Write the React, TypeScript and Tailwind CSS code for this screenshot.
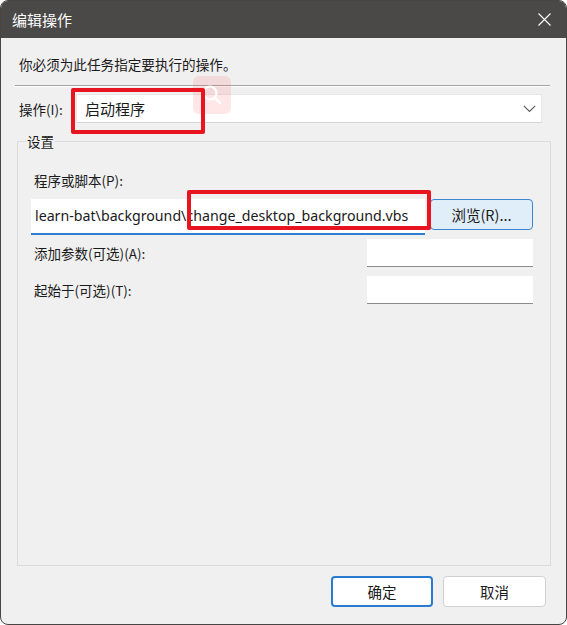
import React from "react";

const cjk = { fontFamily: '"Microsoft YaHei UI", "Noto Sans CJK SC", "Noto Sans", sans-serif' };
const latin = { fontFamily: '"Noto Sans", "Noto Sans CJK SC", sans-serif' };

function Field({ label, top }: { label: string; top: string }) {
  return (
    <div className={`flex items-center ${top}`}>
      <span className="ml-[16px] w-[333px] text-[13.5px] leading-[18px] text-[#1a1a1a]">{label}</span>
      <div className="h-[28px] w-[166px] bg-white border-b border-[#8b8b8b]" />
    </div>
  );
}

export default function App() {
  return (
    <div className="w-[567px] h-[625px] bg-white" style={cjk}>
      <div className="relative flex flex-col h-full rounded-[8px] border border-[#474644] bg-[#f0f0f0] overflow-hidden">
        {/* Title bar */}
        <div className="flex items-center justify-between h-[37px] bg-[#4a4947] text-white">
          <span className="ml-[11px] text-[15px] leading-[20px]">编辑操作</span>
          <svg width="13" height="13" viewBox="0 0 13 13" className="mr-[15px]">
            <path d="M0.5 0.5 L12.5 12.5 M12.5 0.5 L0.5 12.5" stroke="#ffffff" strokeWidth="1.1" />
          </svg>
        </div>

        {/* Instruction */}
        <div className="mt-[17px] ml-[18px] h-[18px] text-[13.6px] leading-[18px] text-[#1a1a1a]">
          你必须为此任务指定要执行的操作。
        </div>
        <div className="mt-[12px] ml-[14px] w-[535px] h-[2px] border-t border-[#a3a3a3] border-b border-b-white" />

        {/* Action */}
        <div className="mt-[7px] flex items-center h-[29px]">
          <span className="ml-[18px] w-[57px] text-[13.5px] leading-[18px] text-[#1a1a1a]">操作(I):</span>
          <div className="flex items-center justify-between h-[29px] w-[466px] bg-white border border-[#e6e6e6] border-b-[#d6d6d6]">
            <span className="ml-[8px] text-[15px] leading-[20px] text-[#1a1a1a]">启动程序</span>
            <svg width="13" height="8" viewBox="0 0 13 8" className="mr-[5px]">
              <path d="M0.8 0.8 L6.5 6.5 L12.2 0.8" fill="none" stroke="#5f5f5f" strokeWidth="1.2" />
            </svg>
          </div>
        </div>

        {/* Settings group */}
        <div className="relative mt-[18px] ml-[16px] w-[534px] flex-1 border border-[#dcdcdc]">
          <span className="absolute -top-[10px] left-[8px] px-[1px] bg-[#f0f0f0] text-[13.5px] leading-[18px] text-[#1a1a1a]">设置</span>
          <div className="mt-[29px] ml-[16px] h-[18px] text-[13.5px] leading-[18px] text-[#1a1a1a]">程序或脚本(P):</div>
          <div className="mt-[10px] flex items-start">
            <div className="ml-[13px] w-[394px] h-[36px] flex items-center bg-white border-b-2 border-[#2f7fcf] overflow-hidden whitespace-nowrap">
              <span className="ml-[4px] text-[14.2px] leading-[20px] text-[#1a1a1a]" style={latin}>
                learn-bat\background\change_desktop_background.vbs
              </span>
            </div>
            <button className="ml-[5px] w-[103px] h-[31px] rounded-[4px] bg-[#e0eef9] border border-[#3b86d1] text-[14.5px] leading-[20px] text-[#1a1a1a]">
              浏览(R)...
            </button>
          </div>
          <Field label="添加参数(可选)(A):" top="mt-[4px]" />
          <Field label="起始于(可选)(T):" top="mt-[9px]" />
        </div>

        {/* Buttons */}
        <div className="mt-[10px] mb-[17px] flex justify-end gap-[10px] pr-[20px]">
          <button className="w-[102px] h-[31px] rounded-[4px] bg-white border-2 border-[#2a7ad0] text-[14.5px] text-[#1a1a1a]">
            确定
          </button>
          <button className="w-[103px] h-[31px] rounded-[4px] bg-white border border-[#d0d0d0] text-[14.5px] text-[#1a1a1a]">
            取消
          </button>
        </div>

        {/* Annotation overlays */}
        <div className="absolute left-[192px] top-[75px] w-[38px] h-[38px] rounded-[6px] bg-[#ff3b3b]/[0.12] flex items-center justify-center">
          <svg width="26" height="26" viewBox="0 0 26 26">
            <circle cx="11" cy="11" r="6.5" fill="none" stroke="#ffffff" strokeWidth="2.2" />
            <path d="M16 16 L21 21" stroke="#ffffff" strokeWidth="2.6" strokeLinecap="round" />
          </svg>
        </div>
        <div className="absolute left-[70px] top-[87px] w-[134px] h-[46px] border-[4px] border-[#e8141f] rounded-[2px]" />
        <div className="absolute left-[186px] top-[189px] w-[244px] h-[40px] border-[4px] border-[#e8141f] rounded-[2px]" />
      </div>
    </div>
  );
}
